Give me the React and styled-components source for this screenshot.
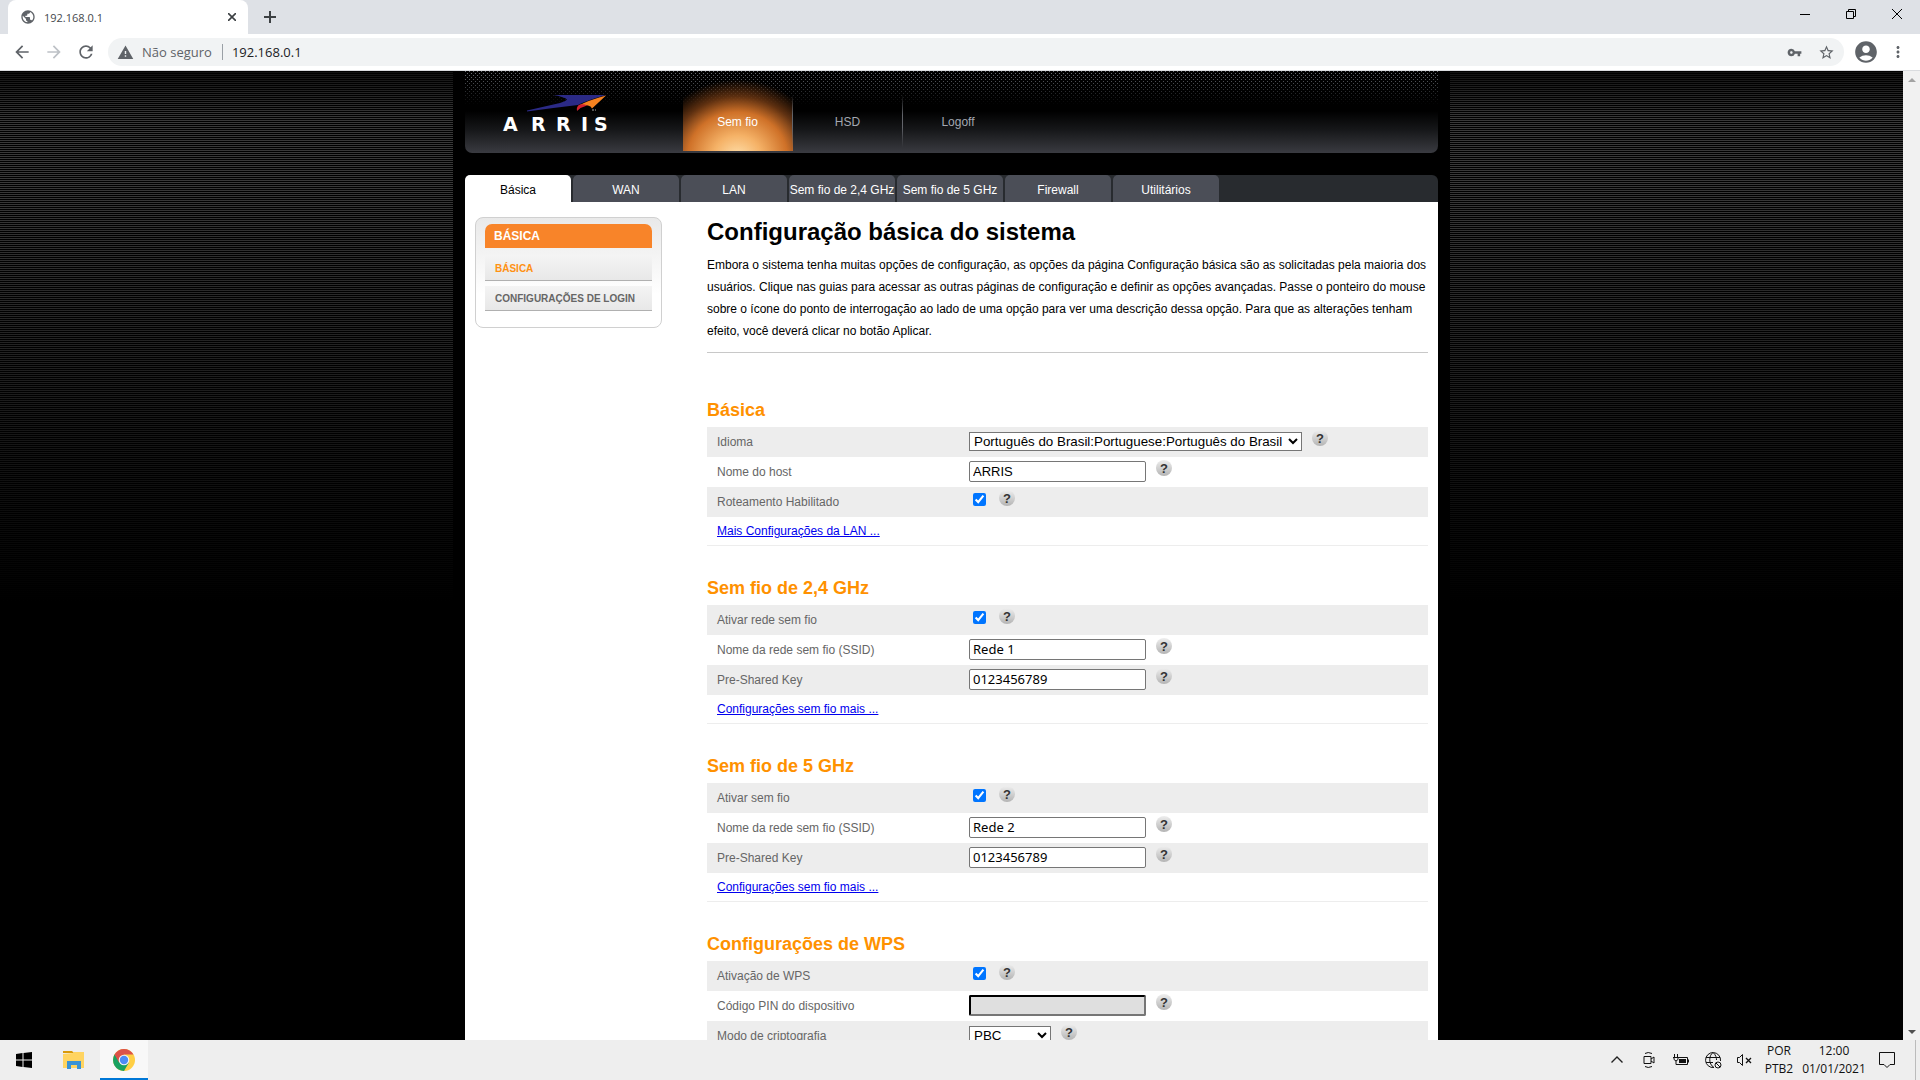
import React, { Fragment } from "react";
import styled, { createGlobalStyle } from "styled-components";
import { MdPublic, MdArrowBack, MdArrowForward, MdRefresh, MdWarning, MdVpnKey, MdStarBorder, MdAccountCircle, MdMoreVert } from "react-icons/md";

const GlobalStyle = createGlobalStyle`
  * {
    box-sizing: border-box;
  }

  body {
    margin: 0;
    font-family: "Liberation Sans", Arial, sans-serif;
    font-size: 12px;
  }

  button {
    padding: 0;
    border: 0;
    background: none;
    font-family: inherit;
    cursor: pointer;
  }
`;

const Desktop = styled.div`
  display: flex;
  flex-direction: column;
  height: 100vh;
  background: #000;
`;

/* browser */

const TabStrip = styled.div`
  display: flex;
  align-items: stretch;
  flex-shrink: 0;
  height: 34px;
  padding-left: 8px;
  background: #dee1e6;
`;

const BrowserTab = styled.div`
  display: flex;
  align-items: center;
  width: 240px;
  padding: 0 9px 0 12px;
  border-radius: 8px 8px 0 0;
  background: #fff;
  color: #45494d;
  font-family: "Open Sans", sans-serif;
  font-size: 11px;
`;

const TabTitle = styled.span`
  flex: 1;
  margin-left: 8px;
`;

const IconButton = styled.button`
  display: flex;
  align-items: center;
  justify-content: center;
  width: ${props => props.$width || 32}px;
  color: ${props => props.$color || "#5f6368"};
`;

const WindowButtons = styled.div`
  display: flex;
  height: 28px;
  margin-left: auto;
`;

const AddressBar = styled.div`
  display: flex;
  flex-shrink: 0;
  align-items: center;
  height: 37px;
  padding: 0 6px;
  border-bottom: 1px solid #dadcdf;
  background: #fff;
`;

const Omnibox = styled.div`
  display: flex;
  flex: 1;
  align-items: center;
  height: 28px;
  margin: 0 6px;
  padding: 0 2px 0 9px;
  border-radius: 14px;
  background: #f1f3f4;
  color: #5f6368;
  font-family: "Open Sans", sans-serif;
  font-size: 13px;
`;

const Insecure = styled.span`
  margin-left: 8px;
  padding-right: 10px;
  border-right: 1px solid #9aa0a6;
  line-height: 16px;
`;

const UrlInput = styled.input`
  flex: 1;
  padding: 0 9px;
  border: 0;
  outline: 0;
  background: none;
  color: #202124;
  font-family: inherit;
  font-size: 13px;
`;

const Viewport = styled.div`
  display: flex;
  flex: 1;
  min-height: 0;
`;

const ScrollBar = styled.div`
  display: flex;
  flex-direction: column;
  justify-content: space-between;
  width: 17px;
  background: #f1f1f1;
`;

const ScrollButton = styled.button`
  display: flex;
  align-items: center;
  justify-content: center;
  height: 17px;
`;

/* router page */

const Page = styled.div`
  flex: 1;
  overflow-y: auto;
  scrollbar-width: none;
  background: linear-gradient(rgba(0, 0, 0, 0.7), rgba(0, 0, 0, 0) 48px, rgba(0, 0, 0, 0) 110px, #000 530px),
    repeating-linear-gradient(#000 0 1px, #393939 1px 2px);
`;

const Shell = styled.div`
  max-width: 997px;
  min-height: 100%;
  margin: 0 auto;
  padding: 0 12px;
  background: #000;
`;

/* dot pattern fades out into the grey sheen at the bottom */
const Header = styled.header`
  display: flex;
  height: 82px;
  border-radius: 0 0 7px 7px;
  background:
    linear-gradient(rgba(0, 0, 0, 0), #000 34px, #000 40px, #151618 58px, #3a3b41),
    conic-gradient(from 270deg at 1px 1px, #70747a 90deg, transparent 0) 0 0 / 4px 4px,
    conic-gradient(from 270deg at 1px 1px, #70747a 90deg, transparent 0) 2px 2px / 4px 4px;
`;

const Logo = styled.svg`
  display: block;
  width: 112px;
  height: 42px;
  margin: 22px 71px 0 35px;
`;

const NavLink = styled.a`
  width: 110px;
  height: 80px;
  border-right: 1px solid;
  border-image: linear-gradient(transparent 30%, #62646a 55%, #62646a 70%, transparent 95%) 1;
  background: ${props =>
    props.$active
      ? "radial-gradient(ellipse 86px 78px at 50% 108%, #ffe0ac 0, #f5b267 28%, #cf7128 58%, rgba(130, 66, 22, 0.72) 78%, transparent)"
      : "none"};
  color: ${props => (props.$active ? "#fff" : "#a3a7b0")};
  line-height: 102px;
  text-align: center;
  text-decoration: none;

  &:last-child {
    border: 0;
  }
`;

const Tabs = styled.nav`
  display: flex;
  gap: 2px;
  height: 27px;
  margin-top: 22px;
  border-radius: 6px 6px 0 0;
  background: #282b2f;
`;

const TabLink = styled.a`
  width: 106px;
  border-radius: 5px 5px 0 0;
  background: ${props => (props.$active ? "#fff" : "#4b4e57")};
  color: ${props => (props.$active ? "#000" : "#fff")};
  line-height: 30px;
  text-align: center;
  text-decoration: none;
  white-space: nowrap;
`;

const Body = styled.div`
  display: flex;
  align-items: flex-start;
  padding: 15px 10px 40px;
  background: #fff;
`;

const SideMenu = styled.aside`
  width: 187px;
  height: 111px;
  margin-right: 45px;
  padding: 6px 9px;
  border: 1px solid #d0d0d0;
  border-radius: 8px;
  background: linear-gradient(#e9e9e9, #fff 70%);
`;

const SideTitle = styled.h3`
  margin: 0 0 8px;
  padding-left: 9px;
  border-radius: 7px 7px 0 0;
  background: #f88429;
  color: #fff;
  font-size: 12px;
  line-height: 24px;
`;

const SideLink = styled.a`
  display: block;
  height: 25px;
  margin-bottom: 5px;
  padding-left: 10px;
  border-bottom: 1px solid #b0b0b0;
  background: linear-gradient(#f4f4f4, #e8e8e8);
  color: ${props => (props.$active ? "#ff9113" : "#666")};
  font-size: 10px;
  font-weight: bold;
  line-height: 26px;
  text-decoration: none;
`;

const Main = styled.main`
  flex: 1;
`;

const Title = styled.h1`
  margin: 0 0 7px;
  font-size: 24px;
  line-height: 30px;
`;

const Intro = styled.p`
  margin: 0 0 46px;
  padding-bottom: 10px;
  border-bottom: 1px solid #c8c8c8;
  line-height: 22px;
`;

const Section = styled.section`
  margin-bottom: 31px;
`;

const SectionTitle = styled.h2`
  margin: 0 0 6px;
  color: #ff9100;
  font-size: 18px;
  line-height: 22px;
`;

const Row = styled.div`
  display: flex;
  align-items: flex-start;
  height: 30px;
  padding: 0 10px;

  &:nth-of-type(odd) {
    background: #ededed;
  }
`;

const Label = styled.label`
  width: 252px;
  color: #666;
  line-height: 30px;
`;

const TextInput = styled.input`
  width: 177px;
  height: 21px;
  margin: 4px 0 0;
  padding: ${props => (props.$system ? "0 3px 2px" : "1px 3px")};
  border: 1px solid #767676;
  border-radius: 2px;
  color: #000;
  font-family: ${props => (props.$system ? '"Noto Sans", sans-serif' : '"Liberation Sans", sans-serif')};
  font-size: 13px;

  &:disabled {
    border: 2px inset #767676;
    border-color: #222 #767676 #767676 #222;
    background: #dfdfdf;
  }
`;

const Select = styled.select`
  width: ${props => props.$width}px;
  height: 19px;
  margin: 5px 0 0;
  border: 1px solid #767676;
  border-radius: 0;
  background: #fff;
  color: #000;
  font-family: "Liberation Sans", sans-serif;
`;

const Checkbox = styled.input`
  width: 13px;
  height: 13px;
  margin: 6px 3px 0 4px;
  accent-color: #0075ff;
`;

const HelpButton = styled.button`
  width: 16px;
  height: 16px;
  margin: 3px 0 0 10px;
  border-radius: 50%;
  background: linear-gradient(#eee, #b4b4b4);
  color: #333;
  font-size: 13px;
  font-weight: bold;
  line-height: 17px;
`;

const More = styled.div`
  height: 29px;
  padding-left: 10px;
  border-bottom: 1px solid #ededed;
  line-height: 28px;

  a {
    color: #0000ee;
  }
`;

/* taskbar */

const Taskbar = styled.footer`
  display: flex;
  flex-shrink: 0;
  align-items: stretch;
  height: 40px;
  padding-right: 4px;
  background: #eee;
  color: #111;
  font-family: "Open Sans", sans-serif;
`;

const TaskButton = styled.button`
  display: flex;
  align-items: center;
  justify-content: center;
  width: 48px;
  margin-right: 2px;
  border-bottom: 2px solid ${props => (props.$active ? "#0078d7" : "transparent")};
  border-top: 2px solid transparent;
  background: ${props => (props.$active ? "#f8f8f8" : "none")};
`;

const Tray = styled.div`
  display: flex;
  align-items: stretch;
  margin-left: auto;
  border-right: 1px solid #bbb;
`;

const TrayText = styled.div`
  width: ${props => props.$width}px;
  padding-top: 2px;
  line-height: 18px;
  text-align: center;
`;

const mainLinks = ["Sem fio", "HSD", "Logoff"];
const tabs = ["Básica", "WAN", "LAN", "Sem fio de 2,4 GHz", "Sem fio de 5 GHz", "Firewall", "Utilitários"];

const sections = [
  {
    title: "Básica",
    more: "Mais Configurações da LAN ...",
    fields: [
      { id: "lang", label: "Idioma", type: "select", width: 333, value: "Português do Brasil:Portuguese:Português do Brasil" },
      { id: "host", label: "Nome do host", type: "text", value: "ARRIS" },
      { id: "routing", label: "Roteamento Habilitado", type: "checkbox" }
    ]
  },
  {
    title: "Sem fio de 2,4 GHz",
    more: "Configurações sem fio mais ...",
    fields: [
      { id: "enable24", label: "Ativar rede sem fio", type: "checkbox" },
      { id: "ssid24", label: "Nome da rede sem fio (SSID)", type: "text", value: "Rede 1", system: true },
      { id: "key24", label: "Pre-Shared Key", type: "text", value: "0123456789", system: true }
    ]
  },
  {
    title: "Sem fio de 5 GHz",
    more: "Configurações sem fio mais ...",
    fields: [
      { id: "enable5", label: "Ativar sem fio", type: "checkbox" },
      { id: "ssid5", label: "Nome da rede sem fio (SSID)", type: "text", value: "Rede 2", system: true },
      { id: "key5", label: "Pre-Shared Key", type: "text", value: "0123456789", system: true }
    ]
  },
  {
    title: "Configurações de WPS",
    fields: [
      { id: "wps", label: "Ativação de WPS", type: "checkbox" },
      { id: "pin", label: "Código PIN do dispositivo", type: "text", value: "", disabled: true },
      { id: "mode", label: "Modo de criptografia", type: "select", width: 82, value: "PBC" }
    ]
  }
];

const ArrisLogo = () => (
  <Logo viewBox="0 0 112 42" role="img" aria-label="ARRIS">
    <path d="M53.300 2H106Q88 7 78 12Q52 15 27 18.500V17.500L60 10Q66 8 67 6.500Q65 4 53.300 2Z" fill="#2b2a86" />
    <path d="M106 2.500L92 15.500Q91 13 88 12.500Q83 11.500 78 13Q86 8 106 2.500Z" fill="#f58220" />
    <path d="M77 18Q76 13 80 11.500Q84 10.500 87 12.500Q81 14 77 18Z" fill="#d3202e" />
    <path d="M92 16.500h2v1h-2z M95 16.500h1v1h-1z" fill="#aaa" />
    <text y="38" x="3 31 56 81 94" fill="#fff" fontFamily="DejaVu Sans" fontSize="19" fontWeight="bold">
      ARRIS
    </text>
  </Logo>
);

const Field = ({ field }) => (
  <Row>
    <Label htmlFor={field.id}>{field.label}</Label>
    {field.type === "select" && (
      <Select id={field.id} $width={field.width}>
        <option>{field.value}</option>
      </Select>
    )}
    {field.type === "text" && (
      <TextInput id={field.id} type="text" defaultValue={field.value} disabled={field.disabled} $system={field.system} />
    )}
    {field.type === "checkbox" && <Checkbox id={field.id} type="checkbox" defaultChecked />}
    <HelpButton type="button">?</HelpButton>
  </Row>
);

const Browser = () => (
  <Fragment>
    <TabStrip>
      <BrowserTab>
        <MdPublic size={16} color="#5f6368" />
        <TabTitle>192.168.0.1</TabTitle>
        <IconButton $width={14} $color="#3c4043" aria-label="Fechar guia">
          <svg width="8" height="8" stroke="currentColor" strokeWidth="1.600">
            <path d="M0 0L8 8M8 0L0 8" />
          </svg>
        </IconButton>
      </BrowserTab>
      <IconButton $width={44} $color="#3c4043" aria-label="Nova guia">
        <svg width="12" height="12" stroke="currentColor" strokeWidth="2">
          <path d="M6 0V12M0 6H12" />
        </svg>
      </IconButton>
      <WindowButtons>
        <IconButton $width={46} $color="#000" aria-label="Minimizar">
          <svg width="10" height="10"><path d="M0 5.500H10" stroke="#000" /></svg>
        </IconButton>
        <IconButton $width={46} $color="#000" aria-label="Restaurar">
          <svg width="10" height="10" fill="none" stroke="#000">
            <path d="M.5 2.500h7v7h-7zM2.500 2.500v-2h7v7h-2" />
          </svg>
        </IconButton>
        <IconButton $width={46} $color="#000" aria-label="Fechar">
          <svg width="10" height="10" stroke="#000"><path d="M0 0L10 10M10 0L0 10" /></svg>
        </IconButton>
      </WindowButtons>
    </TabStrip>
    <AddressBar>
      <IconButton aria-label="Voltar"><MdArrowBack size={20} /></IconButton>
      <IconButton $color="#bdc1c6" aria-label="Avançar"><MdArrowForward size={20} /></IconButton>
      <IconButton aria-label="Recarregar"><MdRefresh size={20} /></IconButton>
      <Omnibox>
        <MdWarning size={17} />
        <Insecure>Não seguro</Insecure>
        <UrlInput aria-label="Endereço" defaultValue="192.168.0.1" />
        <IconButton aria-label="Senhas"><MdVpnKey size={15} /></IconButton>
        <IconButton aria-label="Favoritos"><MdStarBorder size={17} /></IconButton>
      </Omnibox>
      <IconButton aria-label="Perfil"><MdAccountCircle size={26} /></IconButton>
      <IconButton aria-label="Menu"><MdMoreVert size={18} /></IconButton>
    </AddressBar>
  </Fragment>
);

const WindowsTaskbar = () => (
  <Taskbar>
    <TaskButton aria-label="Iniciar">
      <svg width="16" height="16">
        <path d="M0 2L6.500 1V7.500H0zM7.500 .9L16 0V7.500H7.500zM0 8.500H6.500V15L0 14zM7.500 8.500H16V16L7.500 15z" />
      </svg>
    </TaskButton>
    <TaskButton aria-label="Explorador de Arquivos">
      <svg width="22" height="18">
        <path d="M0 0H9L11 2H0z" fill="#d99a0b" />
        <path d="M0 3L10 2L11 1H21V17H0z" fill="#ffd461" />
        <path d="M4 10H18V18H14V14H8V18H4z" fill="#3a93d6" />
      </svg>
    </TaskButton>
    <TaskButton $active aria-label="Chrome">
      <svg width="22" height="22" viewBox="0 0 22 22">
        <circle cx="11" cy="11" r="11" fill="#ffcf45" />
        <path d="M11 11L1.500 5.500A11 11 0 0 0 11 22L15.800 13.700z" fill="#18a160" />
        <path d="M1.500 5.500A11 11 0 0 1 20.500 5.500H11L6.200 13.700z" fill="#dc5248" />
        <circle cx="11" cy="11" r="5.300" fill="#f4f4f4" />
        <circle cx="11" cy="11" r="4.200" fill="#4c8bf5" />
      </svg>
    </TaskButton>
    <Tray>
      <IconButton aria-label="Mostrar ícones ocultos">
        <svg width="12" height="8" fill="none" stroke="#222" strokeWidth="1.400"><path d="M.5 6.500L6 1L11.500 6.500" /></svg>
      </IconButton>
      <IconButton aria-label="Câmera">
        <svg width="12" height="16" fill="none" stroke="#111">
          <path d="M1 4.500H8V11.500H1zM8 7L11 5V11L8 9M2 1.500Q5 -.5 9 1.500M2 14.500Q5 16.500 9 14.500" />
        </svg>
      </IconButton>
      <IconButton aria-label="Bateria">
        <svg width="16" height="12" fill="none" stroke="#111">
          <path d="M5 3.500H14.500V10.500H5M15.500 5.500V8.500M1.500 0V3M4.500 0V3M0 3.500H6M1 3.500V5.500L3 7L5 5.500V3.500M3 7V10.500H5" />
          <path d="M6 5H13V9H6z" fill="#111" stroke="none" />
        </svg>
      </IconButton>
      <IconButton aria-label="Rede">
        <svg width="17" height="17" fill="none" stroke="#111">
          <path d="M9 15.500A7.500 7.500 0 1 1 15.500 9M9 15.500C3 12 4 3 8 .5C11 3 11.500 6 11.500 8M1 5.500H15M1 10.500H8" />
          <circle cx="13" cy="13" r="3" />
          <path d="M11 11L15 15" />
        </svg>
      </IconButton>
      <IconButton $width={30} aria-label="Volume">
        <svg width="15" height="14" fill="none" stroke="#111">
          <path d="M.5 4.500H2.500L5.500 1.500V12.500L2.500 9.500H.5z" />
          <path d="M9 5L14 10M14 5L9 10" strokeWidth="1.300" />
        </svg>
      </IconButton>
      <TrayText $width={40}>
        POR
        <br />
        PTB2
      </TrayText>
      <TrayText $width={70}>
        12:00
        <br />
        01/01/2021
      </TrayText>
      <IconButton $width={36} aria-label="Notificações">
        <svg width="17" height="17" fill="none" stroke="#111"><path d="M.5 .5H15.500V12.500H11L8 15.500L5 12.500H.5z" /></svg>
      </IconButton>
      <IconButton $width={10} aria-label="Mostrar área de trabalho" />
    </Tray>
  </Taskbar>
);

const App = () => (
  <Desktop>
    <GlobalStyle />
    <Browser />
    <Viewport>
      <Page>
        <Shell>
          <Header>
            <ArrisLogo />
            {mainLinks.map((link, i) => (
              <NavLink key={link} href="#" $active={i === 0}>
                {link}
              </NavLink>
            ))}
          </Header>
          <Tabs>
            {tabs.map((tab, i) => (
              <TabLink key={tab} href="#" $active={i === 0}>
                {tab}
              </TabLink>
            ))}
          </Tabs>
          <Body>
            <SideMenu>
              <SideTitle>BÁSICA</SideTitle>
              <SideLink href="#" $active>BÁSICA</SideLink>
              <SideLink href="#">CONFIGURAÇÕES DE LOGIN</SideLink>
            </SideMenu>
            <Main>
              <Title>Configuração básica do sistema</Title>
              <Intro>
                Embora o sistema tenha muitas opções de configuração, as opções da página Configuração básica são as
                solicitadas pela maioria dos usuários. Clique nas guias para acessar as outras páginas de configuração e
                definir as opções avançadas. Passe o ponteiro do mouse sobre o ícone do ponto de interrogação ao lado de
                uma opção para ver uma descrição dessa opção. Para que as alterações tenham efeito, você deverá clicar no
                botão Aplicar.
              </Intro>
              {sections.map(section => (
                <Section key={section.title}>
                  <SectionTitle>{section.title}</SectionTitle>
                  {section.fields.map(field => (
                    <Field key={field.id} field={field} />
                  ))}
                  {section.more && (
                    <More>
                      <a href="#">{section.more}</a>
                    </More>
                  )}
                </Section>
              ))}
            </Main>
          </Body>
        </Shell>
      </Page>
      <ScrollBar>
        <ScrollButton aria-label="Rolar para cima">
          <svg width="8" height="4"><path d="M0 4L4 0L8 4z" fill="#a3a3a3" /></svg>
        </ScrollButton>
        <ScrollButton aria-label="Rolar para baixo">
          <svg width="8" height="4"><path d="M0 0L4 4L8 0z" fill="#505050" /></svg>
        </ScrollButton>
      </ScrollBar>
    </Viewport>
    <WindowsTaskbar />
  </Desktop>
);

export default App;
